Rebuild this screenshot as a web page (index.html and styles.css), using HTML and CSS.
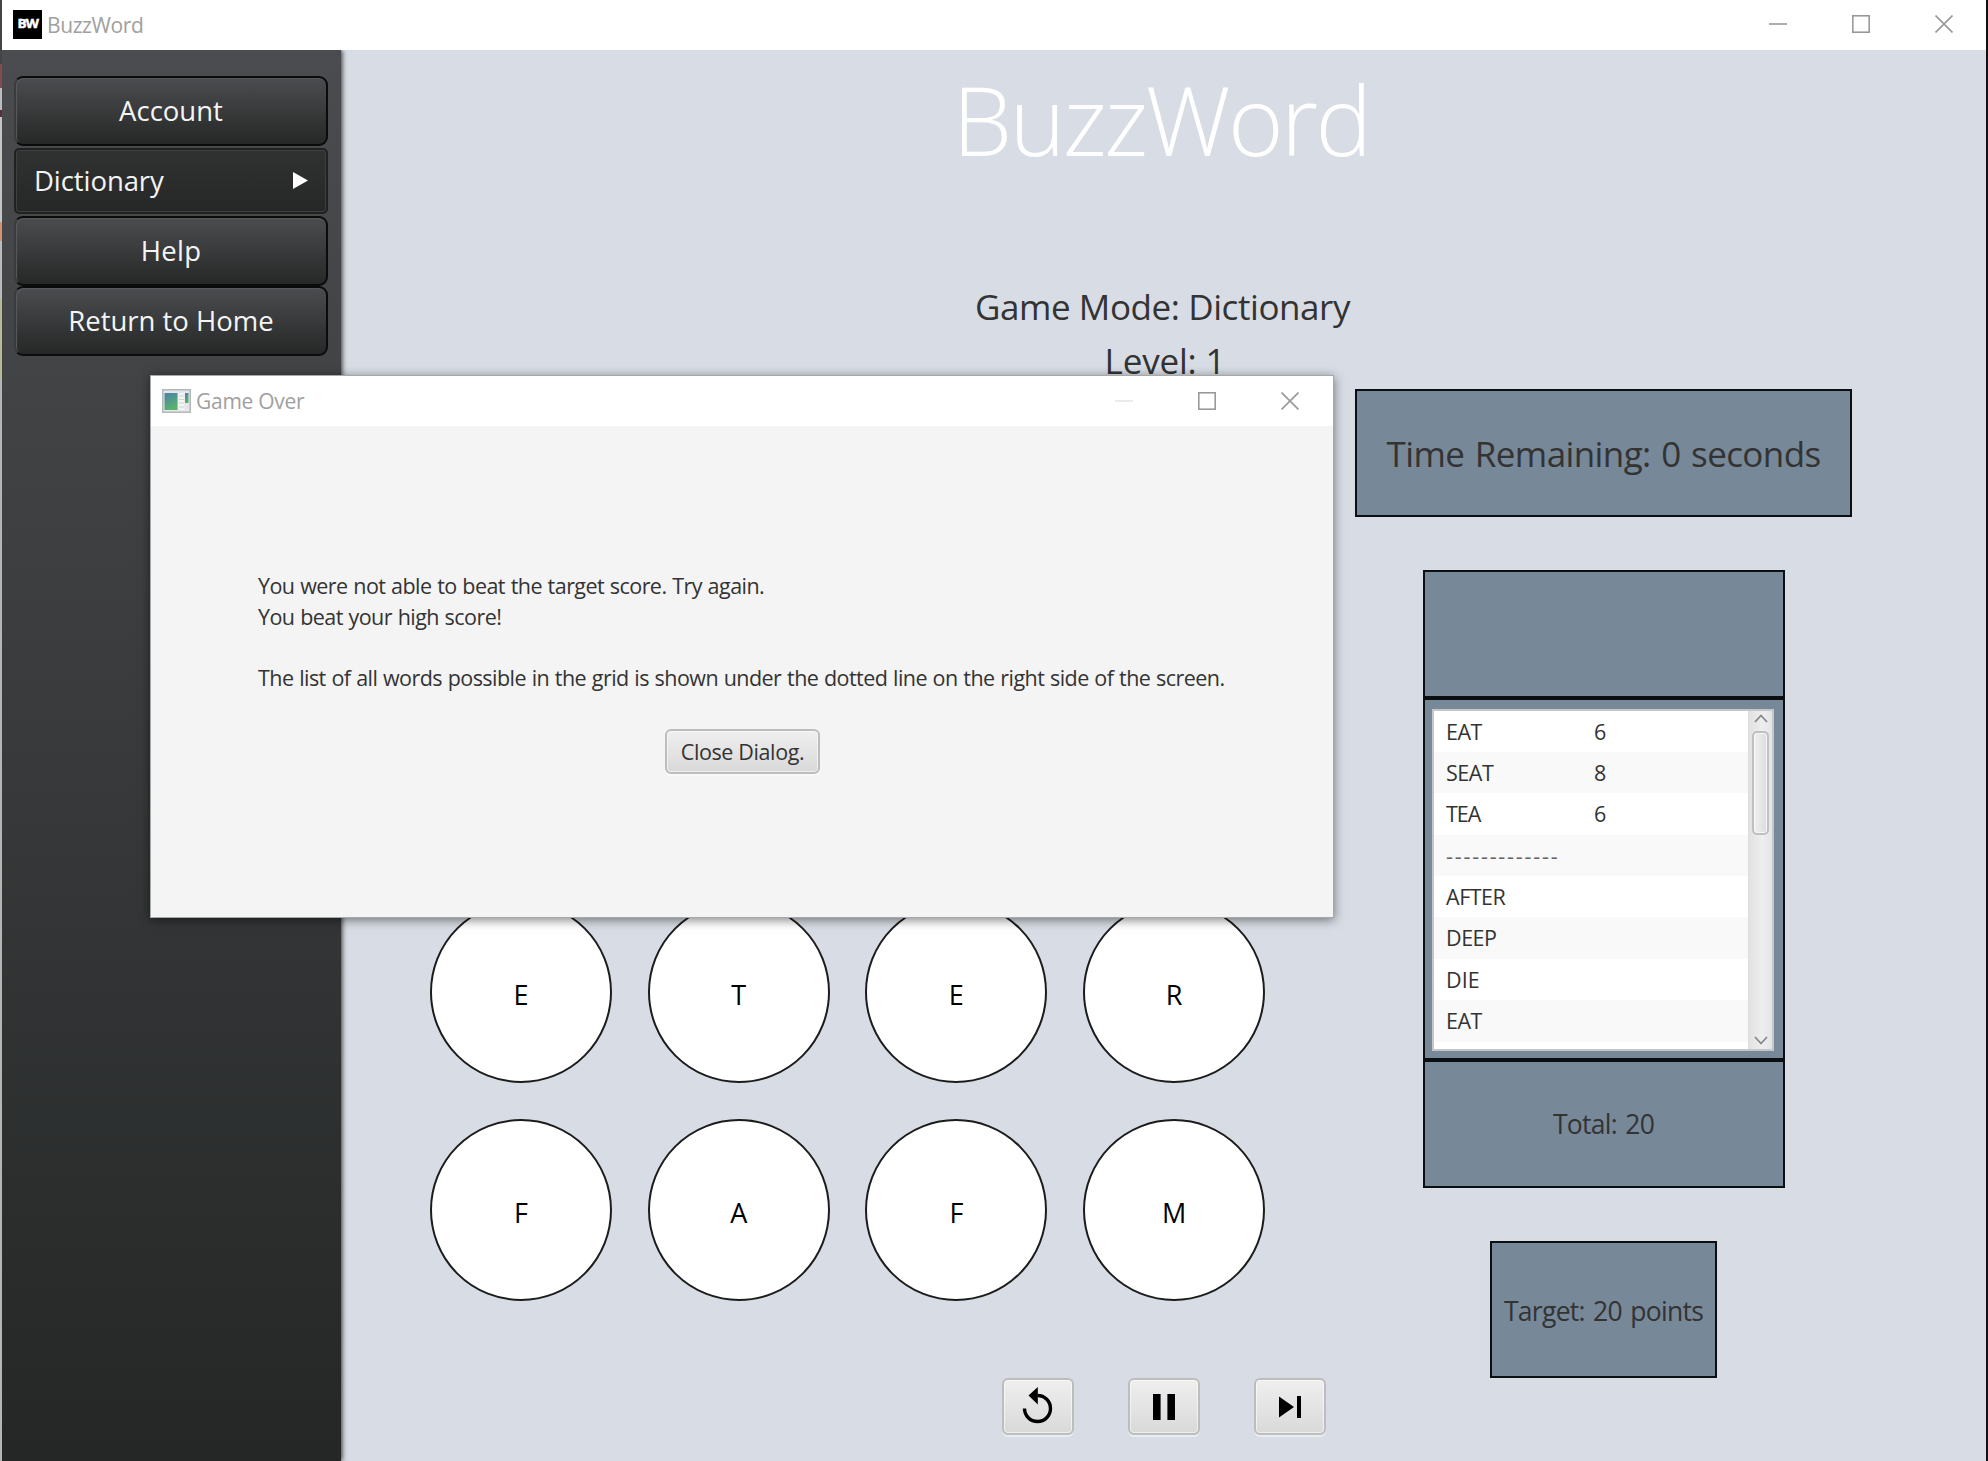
FILE: index.html
```html
<!DOCTYPE html>
<html lang="en">
<head>
<meta charset="utf-8">
<title>BuzzWord</title>
<link rel="stylesheet" href="styles.css">
</head>
<body>
<div class="desktop">
  <div class="app">
    <header class="titlebar">
      <div class="app-icon"><span>BW</span></div>
      <span class="window-title">BuzzWord</span>
      <div class="window-buttons">
        <svg width="18" height="18" viewBox="0 0 18 18"><path d="M0 9H18" /></svg>
        <svg width="18" height="18" viewBox="0 0 18 18"><rect x=".8" y=".8" width="16.4" height="16.4" /></svg>
        <svg width="18" height="18" viewBox="0 0 18 18"><path d="M.5 .5L17.5 17.5M17.5 .5L.5 17.5" /></svg>
      </div>
    </header>
    <div class="workspace">
      <nav class="sidebar">
        <button class="nav-button">Account</button>
        <button class="nav-button nav-menu"><span class="nav-label">Dictionary</span><svg width="15" height="17" viewBox="0 0 15 17"><path d="M0 0L15 8.5L0 17Z" fill="#fff" /></svg></button>
        <button class="nav-button nav-help">Help</button>
        <button class="nav-button">Return to Home</button>
      </nav>
      <main class="game">
        <h1 class="game-title">BuzzWord</h1>
        <div class="mode">Game Mode: Dictionary</div>
        <div class="mode level">Level: 1</div>
        <div class="board">
          <div class="letters">
            <div class="letter">E</div><div class="letter">T</div><div class="letter">E</div><div class="letter">R</div>
            <div class="letter">F</div><div class="letter">A</div><div class="letter">F</div><div class="letter">M</div>
          </div>
          <aside class="stats">
            <div class="panel time">Time Remaining: 0 seconds</div>
            <div class="score">
              <div class="panel current"></div>
              <div class="panel found">
                <div class="list">
                  <div class="rows">
                    <div class="row"><span class="word">EAT</span><span>6</span></div>
                    <div class="row"><span class="word">SEAT</span><span>8</span></div>
                    <div class="row"><span class="word tea">TEA</span><span>6</span></div>
                    <div class="row dashes">-------------</div>
                    <div class="row">AFTER</div>
                    <div class="row">DEEP</div>
                    <div class="row die">DIE</div>
                    <div class="row">EAT</div>
                    <div class="row"></div>
                  </div>
                  <div class="scrollbar">
                    <svg width="14" height="9" viewBox="0 0 14 9"><path d="M1 8L7 1.5L13 8" /></svg>
                    <div class="thumb"></div>
                    <svg class="down" width="14" height="9" viewBox="0 0 14 9"><path d="M1 1L7 7.5L13 1" /></svg>
                  </div>
                </div>
              </div>
              <div class="panel total">Total: 20</div>
            </div>
            <div class="panel target">Target: 20 points</div>
          </aside>
        </div>
        <div class="controls">
          <button class="fx-button"><svg class="restart" width="32" height="38" viewBox="0 0 32 38"><path d="M2.500 22.500A13 13 0 1 0 15.500 9.500" fill="none" stroke="#000" stroke-width="3.4" /><path d="M6.500 9.500L15.800 1V18.500Z" /></svg></button>
          <button class="fx-button"><svg width="22" height="26" viewBox="0 0 22 26"><path d="M0 0H7.6V26H0ZM14.4 0H22V26H14.4Z" /></svg></button>
          <button class="fx-button"><svg width="22" height="22" viewBox="0 0 22 22"><path d="M0 .5L15 11L0 21.5ZM18 0H22V22H18Z" /></svg></button>
        </div>
      </main>
    </div>
  </div>
  <div class="dialog">
    <header class="titlebar dialog-bar">
      <svg width="29" height="24" viewBox="0 0 29 24">
        <defs><linearGradient id="pane" x1="0" y1="0" x2=".4" y2="1"><stop offset="0" stop-color="#4d7fae" /><stop offset="1" stop-color="#58b368" /></linearGradient></defs>
        <rect x=".75" y=".75" width="27.5" height="22.5" fill="#e4e6e9" stroke="#b4b7ba" stroke-width="1.5" />
        <rect x="2.5" y="4" width="13" height="17" fill="url(#pane)" />
        <rect x="16.5" y="4" width="6" height="17" fill="#f4f4f4" />
        <path d="M17 7H22M17 10.500H22M17 14H22M17 18H22" stroke="#d3d3d3" />
        <rect x="23" y="4" width="3.500" height="10" fill="url(#pane)" />
      </svg>
      <span class="window-title">Game Over</span>
      <div class="window-buttons">
        <svg class="disabled" width="18" height="18" viewBox="0 0 18 18"><path d="M0 9H18" /></svg>
        <svg width="18" height="18" viewBox="0 0 18 18"><rect x=".8" y=".8" width="16.4" height="16.4" /></svg>
        <svg width="18" height="18" viewBox="0 0 18 18"><path d="M.5 .5L17.5 17.5M17.5 .5L.5 17.5" /></svg>
      </div>
    </header>
    <div class="dialog-body">
      <div class="message">You were not able to beat the target score. Try again.<br>You beat your high score!<br><br>The list of all words possible in the grid is shown under the dotted line on the right side of the screen.</div>
      <button class="fx-button close-dialog">Close Dialog.</button>
    </div>
  </div>
</div>
</body>
</html>
```
FILE: styles.css
```css
* { box-sizing: border-box; }

body {
  margin: 0;
  font-family: "Open Sans", "Noto Sans", sans-serif;
  color: #333;
}

button { font-family: inherit; margin: 0; }

.desktop {
  position: relative;
  width: 1988px;
  height: 1461px;
  overflow: hidden;
  padding: 0 2px;
  background: linear-gradient(#444 64px, #844b4f 64px 88px, #bcbcbc 88px 110px, #5b2f3a 110px 117px, #c4c6c4 117px 222px, #d3946f 222px 241px, #b9bcbc 241px 298px, #b9b99a 298px 380px, #b4b6b4 380px) 0 0 / 2px 100% no-repeat, #101010;
}

.app {
  height: 100%;
  display: flex;
  flex-direction: column;
}

.titlebar {
  height: 50px;
  flex: none;
  display: flex;
  align-items: center;
  background: #fff;
  padding: 0 33px 2px 11px;
}

.app-icon {
  width: 29px;
  height: 29px;
  background: #000;
  color: #fff;
  font: bold 13px/27px "Open Sans", sans-serif;
  text-align: center;
  letter-spacing: -1px;
}

.app-icon span {
  display: inline-block;
  transform: scaleX(1.05);
  -webkit-text-stroke: .5px #fff;
}

.window-title {
  margin-left: 5px;
  padding-top: 2px;
  font-size: 21px;
  letter-spacing: -.39px;
  color: #a0a0a0;
}

.window-buttons {
  margin-left: auto;
  display: flex;
  gap: 65px;
}

.window-buttons svg {
  fill: none;
  stroke: #999;
  stroke-width: 1.6;
}

.window-buttons .disabled { stroke: #e6e6e6; }

.workspace { flex: 1; display: flex; min-height: 0; }

.sidebar {
  position: relative;
  width: 339px;
  padding: 26px 13px 0 12px;
  background: linear-gradient(#4b4c4f, #242726);
  box-shadow: 1px 0 5px rgba(0, 0, 0, .8);
  clip-path: inset(0 -10px 0 0);
}

.nav-button {
  display: flex;
  align-items: center;
  justify-content: center;
  width: 314px;
  height: 70px;
  padding: 0 0 2px;
  color: #f4f4f4;
  font-size: 27.5px;
  border: 2px solid #0b0b0b;
  border-left-color: #3a3b3c;
  border-radius: 9px;
  background: linear-gradient(#4b4c4f, #262827);
  box-shadow: inset 1px 1px 1px #5a5b5d;
}

.nav-menu {
  justify-content: space-between;
  height: 66px;
  margin: 2px 0;
  padding: 0 18px 1px;
  border-color: #202221;
  border-radius: 5px;
  background: linear-gradient(#303231, #262827);
  box-shadow: inset 0 0 0 1px #3e4040;
}

.nav-label { letter-spacing: -.08px; }
.nav-help { letter-spacing: .28px; }

.game {
  flex: 1;
  padding-top: 7px;
  background: #d8dde5;
}

.game-title {
  margin: 0 5px 98px 0;
  font-size: 95px;
  line-height: 125px;
  font-weight: 300;
  letter-spacing: -2.53px;
  color: #fff;
  text-align: center;
}

.mode {
  font-size: 35px;
  line-height: 54px;
  letter-spacing: -.42px;
  padding-right: 2px;
  text-align: center;
}

.level {
  letter-spacing: -.17px;
  padding: 0 0 0 3px;
}

.board {
  display: flex;
  gap: 90px;
  height: 990px;
  padding: 1px 0 0 89px;
}

.letters {
  align-self: flex-end;
  display: grid;
  grid-template-columns: repeat(4, 182px);
  gap: 36px 35.7px;
  padding-bottom: 77px;
}

.letter {
  height: 182px;
  display: flex;
  align-items: center;
  justify-content: center;
  padding-top: 4px;
  font-size: 27px;
  color: #000;
  background: #fff;
  border: 2px solid #1c1c1c;
  border-radius: 50%;
}

.stats {
  display: flex;
  flex-direction: column;
  align-items: center;
}

.panel {
  display: flex;
  align-items: center;
  justify-content: center;
  border: 2px solid #0c0f12;
  background: #778899;
  font-size: 26.5px;
  letter-spacing: -.69px;
  word-spacing: 2px;
}

.time {
  width: 497px;
  height: 128px;
  font-size: 35px;
  letter-spacing: -.6px;
}

.score { width: 362px; margin: 53px 0; }

.current, .total { height: 128px; }

.total { padding-bottom: 1px; }

.found { height: 362px; padding-top: 1px; }

.list {
  display: flex;
  width: 342px;
  height: 342px;
  margin-right: 1px;
  border: 2px solid #c4c7ca;
  background: #fff;
  overflow: hidden;
}

.rows { flex: 1; }

.row {
  display: flex;
  height: 41.4px;
  padding-left: 12px;
  font-size: 21.5px;
  line-height: 42px;
  letter-spacing: -.5px;
}

.row:nth-child(even) { background: #f9f9f9; }

.word { width: 148px; }
.tea { letter-spacing: -1.1px; }
.die { letter-spacing: .1px; }
.dashes { letter-spacing: 1.8px; color: #666; }

.scrollbar {
  width: 24px;
  padding: 3px 3px 4px;
  display: flex;
  flex-direction: column;
  align-items: center;
  border-left: 1px solid #ddd;
  background: linear-gradient(90deg, #e2e2e2, #eee 60%, #e4e4e4);
}

.scrollbar svg {
  fill: none;
  stroke: #888;
  stroke-width: 1.8;
  flex: none;
}

.scrollbar .down { margin-top: auto; }

.thumb {
  width: 17px;
  height: 104px;
  margin-top: 8px;
  border: 2px solid #c0c0c0;
  border-radius: 5px;
  background: linear-gradient(90deg, #f0f0f0, #dcdcdc);
  box-shadow: inset 0 0 0 1px #f7f7f7;
}

.target { width: 227px; height: 137px; padding-top: 2px; }

.controls {
  display: flex;
  justify-content: center;
  gap: 54px;
}

.fx-button {
  display: flex;
  align-items: center;
  justify-content: center;
  width: 72px;
  height: 57px;
  padding: 0;
  border: 2px solid #bdbdbd;
  border-radius: 6px;
  background: linear-gradient(#efefef, #d9d9d9);
  box-shadow: inset 0 0 0 1px rgba(255, 255, 255, .55), 0 2px 0 rgba(255, 255, 255, .45);
  color: #333;
}

.restart { margin-bottom: 3px; }

.dialog {
  position: absolute;
  z-index: 2;
  left: 150px;
  top: 375px;
  width: 1184px;
  height: 543px;
  border: 1px solid #a6a9ac;
  background: #f4f4f4;
  box-shadow: 0 2px 10px rgba(0, 0, 0, .5);
}

.dialog-bar { padding: 0 34px 1px 11px; }

.dialog-bar .window-title {
  padding-top: 1px;
  letter-spacing: -.28px;
}

.dialog-body { padding: 145px 0 0 107px; }

.message {
  font-size: 21.5px;
  line-height: 30.6px;
  letter-spacing: -.55px;
  word-spacing: .65px;
  white-space: nowrap;
}

.close-dialog {
  width: 155px;
  height: 45px;
  margin: 36px 0 0 407px;
  font-size: 21.5px;
  letter-spacing: -.38px;
}
```
